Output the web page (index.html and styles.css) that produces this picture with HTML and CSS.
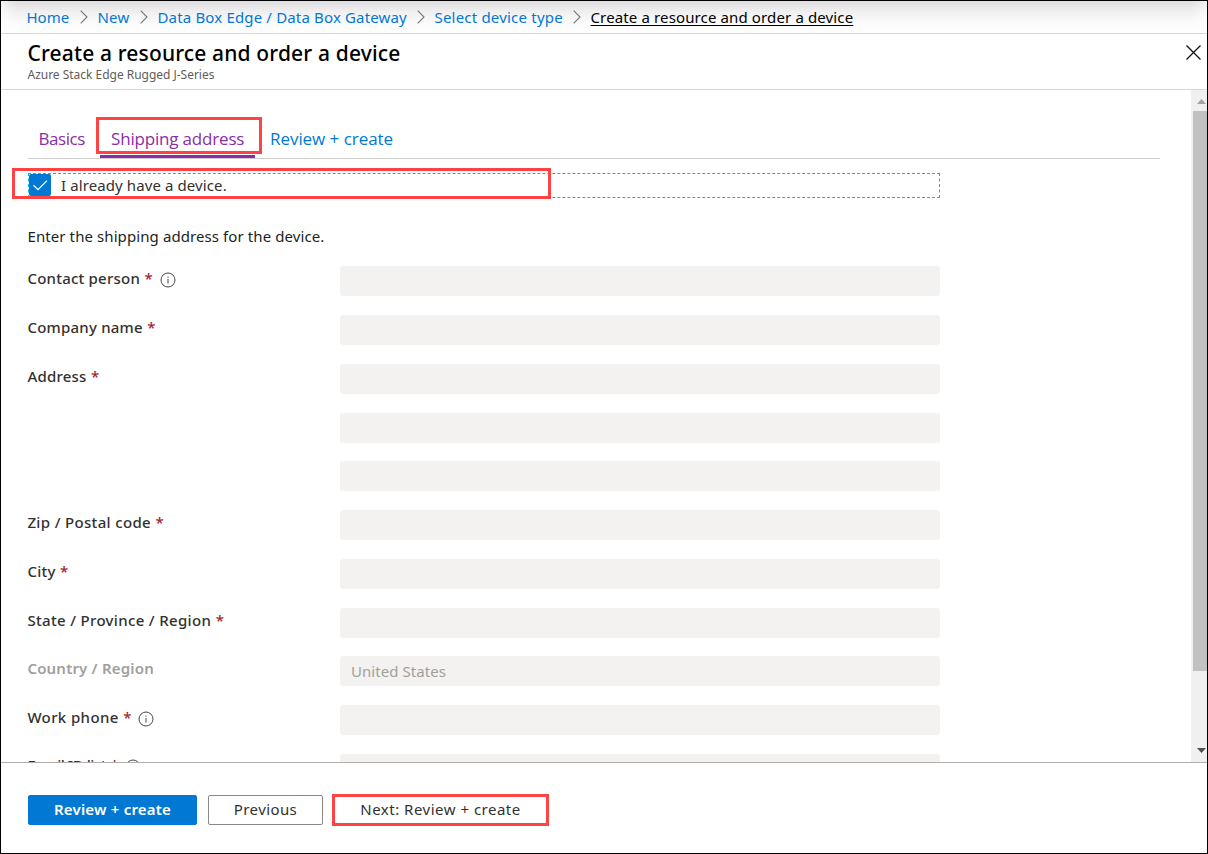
FILE: index.html
```html
<!DOCTYPE html>
<html lang="en">
<head>
<meta charset="utf-8">
<title>Create a resource and order a device</title>
<link rel="stylesheet" href="styles.css">
</head>
<body>
<div class="window">
  <nav class="breadcrumb">
    <a class="c-home">Home</a>
    <svg class="chev" viewBox="0 0 8 14"><path d="M.7.7 7 7 .7 13.300"/></svg>
    <a class="c-new">New</a>
    <svg class="chev" viewBox="0 0 8 14"><path d="M.7.7 7 7 .7 13.300"/></svg>
    <a class="c-box">Data Box Edge / Data Box Gateway</a>
    <svg class="chev" viewBox="0 0 8 14"><path d="M.7.7 7 7 .7 13.300"/></svg>
    <a class="c-type">Select device type</a>
    <svg class="chev" viewBox="0 0 8 14"><path d="M.7.7 7 7 .7 13.300"/></svg>
    <a class="c-current">Create a resource and order a device</a>
  </nav>
  <header class="header">
    <div>
      <h1 class="title">Create a resource and order a device</h1>
      <div class="subtitle">Azure Stack Edge Rugged J-Series</div>
    </div>
    <svg class="close" viewBox="0 0 15 15"><path d="M.5.5l14 14M14.500.5l-14 14"/></svg>
  </header>
  <main class="content">
    <div class="pane">
      <div class="tabs">
        <span class="tab basics">Basics</span>
        <span class="tab shipping">Shipping address<i class="mark mark-tab"></i></span>
        <span class="tab review">Review + create</span>
      </div>
      <div class="check-row">
        <span class="checkbox"><svg viewBox="0 0 22 22"><path d="M4.500 11.300l4.500 4.300 9-9"/></svg></span>
        <span class="check-label">I already have a device.</span>
        <i class="mark mark-check"></i>
      </div>
      <p class="intro">Enter the shipping address for the device.</p>
      <div class="form">
        <div class="row"><label>Contact person<b>*</b><svg class="info" viewBox="0 0 16 16"><circle cx="8" cy="8" r="7"/><path d="M8 4.500v1.200M8 7v4.500"/></svg></label><div class="field"></div></div>
        <div class="row"><label>Company name<b>*</b></label><div class="field"></div></div>
        <div class="row"><label>Address<b>*</b></label><div class="field"></div></div>
        <div class="row"><label></label><div class="field"></div></div>
        <div class="row"><label></label><div class="field"></div></div>
        <div class="row"><label class="zip">Zip / Postal code<b>*</b></label><div class="field"></div></div>
        <div class="row"><label>City<b>*</b></label><div class="field"></div></div>
        <div class="row"><label class="state">State / Province / Region<b>*</b></label><div class="field"></div></div>
        <div class="row"><label class="muted">Country / Region</label><div class="field">United States</div></div>
        <div class="row"><label class="phone">Work phone<b>*</b><svg class="info" viewBox="0 0 16 16"><circle cx="8" cy="8" r="7"/><path d="M8 4.500v1.200M8 7v4.500"/></svg></label><div class="field"></div></div>
        <div class="row"><label class="email">Email ID list<b>*</b><svg class="info" viewBox="0 0 16 16"><circle cx="8" cy="8" r="7"/><path d="M8 4.500v1.200M8 7v4.500"/></svg></label><div class="field"></div></div>
      </div>
    </div>
    <div class="scrollbar">
      <svg class="arrow up" viewBox="0 0 9 5"><path d="M4.500 0 9 5H0z"/></svg>
      <div class="thumb"></div>
      <svg class="arrow down" viewBox="0 0 9 5"><path d="M0 0h9L4.500 5z"/></svg>
    </div>
  </main>
  <footer class="footer">
    <button class="btn primary">Review + create</button>
    <button class="btn previous">Previous</button>
    <button class="btn next">Next: Review + create</button>
  </footer>
</div>
</body>
</html>
```
FILE: styles.css
```css
* { box-sizing: border-box; }

body {
  margin: 0;
  font: 15px/20px "Noto Sans", "Open Sans", sans-serif;
  color: #323130;
  background: #fff;
}

.window {
  display: flex;
  flex-direction: column;
  width: 1208px;
  height: 854px;
  border: 1px solid #000;
  overflow: hidden;
}

/* Breadcrumb */
.breadcrumb {
  display: flex;
  align-items: center;
  flex: none;
  height: 33px;
  padding-left: 25.500px;
  border-bottom: 1px solid #d6d6d6;
  background:
    linear-gradient(90deg, #fff9, #fff0 16px, #fff0 calc(100% - 16px), #fff9),
    linear-gradient(#dedcde, #f1f0f1 11px, #fcfcfc 23px, #fff);
  color: #0078d4;
  white-space: nowrap;
}
.breadcrumb a { flex: none; }
.c-home { width: 53px; }
.c-new { width: 42px; letter-spacing: .2px; }
.c-box { width: 259px; letter-spacing: .16px; }
.c-type { width: 138px; letter-spacing: .2px; }
.c-current {
  color: #000;
  letter-spacing: .13px;
  text-decoration: underline;
  text-underline-offset: 2px;
  text-decoration-thickness: 1px;
}
.chev {
  flex: none;
  width: 8px;
  height: 14px;
  margin-right: 10px;
  fill: none;
  stroke: #767676;
  stroke-width: 1.1;
}

/* Title area */
.header {
  display: flex;
  justify-content: space-between;
  flex: none;
  height: 56px;
  padding: 5px 6px 0 26.500px;
  border-bottom: 1px solid #d6d6d6;
}
.title {
  margin: 0;
  font-size: 21px;
  font-weight: 500;
  line-height: 28px;
  letter-spacing: .15px;
  color: #000;
}
.subtitle {
  font-size: 12px;
  line-height: 15px;
  color: #605e5c;
  letter-spacing: -.02px;
}
.close {
  width: 15px;
  height: 15px;
  margin-top: 6px;
  fill: none;
  stroke: #111;
  stroke-width: 1.3;
}

/* Scrolling content */
.content {
  display: flex;
  flex: none;
  height: 672px;
  overflow: hidden;
}
.pane { flex: 1; padding: 27px 31px 0 27px; }

.tabs {
  display: flex;
  height: 42px;
  border-bottom: 1px solid #d2d0ce;
  font-family: "Open Sans", "Noto Sans", sans-serif;
  font-size: 17px;
  line-height: 43px;
}
.tab { position: relative; white-space: nowrap; color: #8a2da5; }
.basics { width: 72px; padding-left: 10.500px; letter-spacing: -.45px; }
.shipping {
  width: 155px;
  height: 41px;
  padding-left: 11px;
  border-bottom: 3px solid #8a2da5;
  letter-spacing: -.18px;
}
.review { padding-left: 15px; color: #0078d4; letter-spacing: -.05px; }

.check-row {
  position: relative;
  display: flex;
  width: 912px;
  height: 25px;
  margin-top: 14px;
  border: 1px dashed #00b7ed;
}
.checkbox {
  width: 22px;
  height: 22px;
  border-radius: 2px;
  background: #0078d4;
}
.checkbox svg {
  display: block;
  fill: none;
  stroke: #fff;
  stroke-width: 1.2;
}
.check-label { padding-left: 10px; line-height: 23px; letter-spacing: .1px; }

/* Highlight frames laid over the controls */
.mark { position: absolute; border: 3px solid #ff4343; }
.mark-tab { left: -4px; top: 0; width: 166px; height: 37px; }
.mark-check { left: -17px; top: -6px; width: 539px; height: 31px; }

.intro { margin: 28px 0 0 -.5px; letter-spacing: .09px; color: #201f1e; }

/* Form */
.form { margin-top: 20.300px; }
.row {
  display: grid;
  grid-template-columns: 312px 600px;
  height: 48.750px;
}
label {
  display: flex;
  height: 25px;
  margin-left: -.6px;
  line-height: 25px;
  font-weight: 500;
  letter-spacing: .22px;
  white-space: nowrap;
}
label b { margin-left: 4.500px; font-weight: 500; color: #a4262c; }
.zip { letter-spacing: .34px; }
.state { letter-spacing: .33px; }
.phone { letter-spacing: .38px; }
.email { line-height: 22px; letter-spacing: -.45px; }
.muted { color: #a19f9d; font-weight: 600; letter-spacing: .19px; }
.info {
  width: 16px;
  height: 16px;
  margin: 6px 0 0 6.500px;
  fill: none;
  stroke: #484644;
}
.email .info { margin-top: 5px; }
.field {
  height: 30px;
  padding-left: 11px;
  border-radius: 3px;
  background: #f3f2f1;
  color: #a19f9d;
  line-height: 30px;
  letter-spacing: .05px;
}

.scrollbar {
  display: flex;
  flex-direction: column;
  flex: none;
  align-items: flex-end;
  width: 16px;
  background: #f0f0f0;
}
.thumb { width: 14px; height: 560px; background: #c1c1c1; }
.arrow { width: 9px; height: 5px; margin-right: 1px; }
.up { margin-top: 9px; margin-bottom: 7px; fill: #a3a3a3; }
.down { margin-top: 77px; fill: #505050; }

/* Footer */
.footer {
  display: flex;
  flex: 1;
  align-items: flex-start;
  padding: 31px 0 0 27px;
  border-top: 1px solid #b3b0ad;
}
.btn {
  height: 30px;
  padding: 0 0 2px;
  border: 1px solid #8a8886;
  border-radius: 2px;
  background: #fff;
  color: #323130;
  font: 400 15px/26px "Noto Sans", "Open Sans", sans-serif;
  letter-spacing: .4px;
}
.primary {
  width: 169px;
  margin: 1px 11px 0 0;
  border-color: #0078d4;
  background: #0078d4;
  color: #fff;
  font-weight: 600;
  letter-spacing: .2px;
}
.previous { width: 115px; margin: 1px 9px 0 0; }
.next {
  width: 217px;
  height: 32px;
  border: 3px solid #ff4343;
  border-radius: 0;
  letter-spacing: .5px;
  line-height: 24px;
}
```
